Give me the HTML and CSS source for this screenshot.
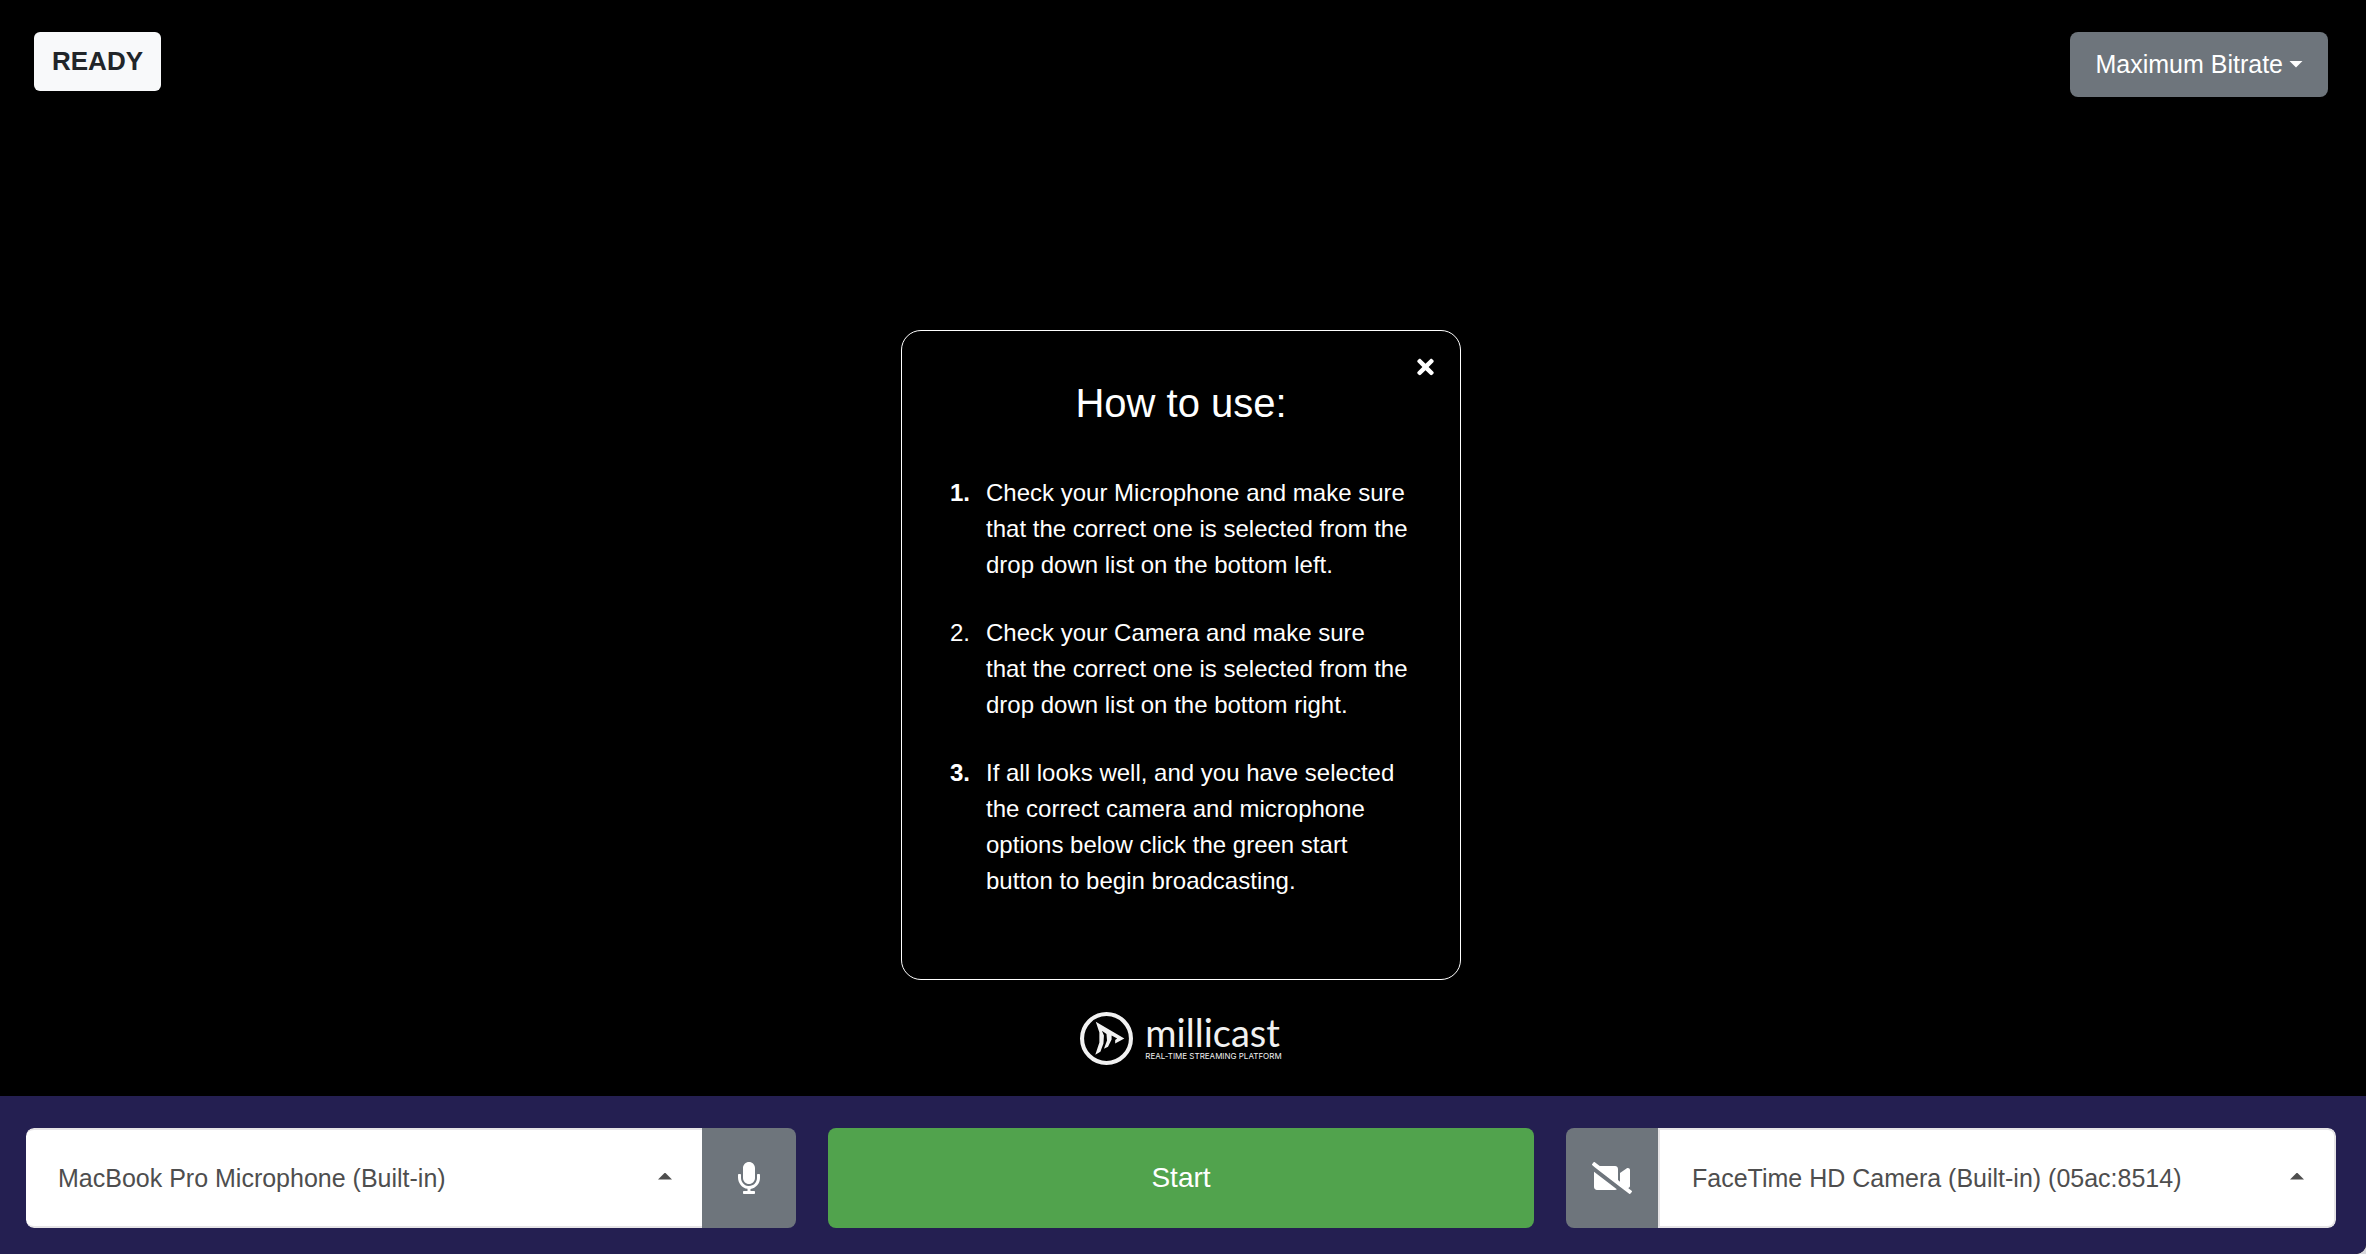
FILE: index.html
```html
<!DOCTYPE html>
<html lang="en">
<head>
<meta charset="utf-8">
<meta name="viewport" content="width=device-width, initial-scale=1">
<title>Millicast Publisher</title>
<link rel="stylesheet" href="styles.css">
</head>
<body>
<div class="app">
  <main class="stage">
    <header class="topbar">
      <span class="badge">READY</span>
      <button class="bitrate" type="button" aria-haspopup="true">Maximum Bitrate<span class="caret caret-down"></span></button>
    </header>

    <section class="guide" aria-labelledby="guide-title">
      <button class="close" type="button" aria-label="Close">
        <svg width="17" height="24" viewBox="0 0 352 512" fill="currentColor" aria-hidden="true"><path d="M242.72 256l100.07-100.07c12.28-12.28 12.28-32.19 0-44.48l-22.24-22.24c-12.28-12.28-32.19-12.28-44.48 0L176 189.28 75.93 89.21c-12.28-12.28-32.19-12.28-44.48 0L9.21 111.45c-12.28 12.28-12.28 32.19 0 44.48L109.28 256 9.21 356.07c-12.28 12.28-12.28 32.19 0 44.48l22.24 22.24c12.28 12.28 32.2 12.28 44.48 0L176 322.72l100.07 100.07c12.28 12.28 32.2 12.28 44.48 0l22.24-22.24c12.28-12.28 12.28-32.19 0-44.48L242.72 256z"/></svg>
      </button>
      <h1 class="guide-title" id="guide-title">How to use:</h1>
      <ol class="steps">
        <li class="step"><b>1.</b><p>Check your Microphone and make sure that the correct one is selected from the drop down list on the bottom left.</p></li>
        <li class="step"><span>2.</span><p>Check your Camera and make sure that the correct one is selected from the drop down list on the bottom right.</p></li>
        <li class="step"><b>3.</b><p>If all looks well, and you have selected the correct camera and microphone options below click the green start button to begin broadcasting.</p></li>
      </ol>
    </section>

    <div class="logo">
      <svg width="53" height="53" viewBox="0 0 52 52" aria-hidden="true">
        <circle cx="26" cy="26" r="24" fill="none" stroke="#f1f1f1" stroke-width="4"/>
        <path fill="#f1f1f1" d="M15.5 9.5L43.5 26L34.5 31L34.5 27.5L36.5 26L31 23L31 27L27.5 34L23.5 36L26.5 28L26 21.5L21.5 18.5L23.5 23L23 31L20 39L15 42L19 30L19 20Z"/>
      </svg>
      <div class="wordmark">
        <span class="name">millicast</span>
        <span class="tagline">REAL-TIME STREAMING PLATFORM</span>
      </div>
    </div>
  </main>

  <footer class="controls">
    <div class="group">
      <label class="picker picker-mic">
        <select aria-label="Microphone"><option>MacBook Pro Microphone (Built-in)</option></select>
        <span class="caret caret-up"></span>
      </label>
      <button class="toggle toggle-mic" type="button" aria-label="Mute microphone">
        <svg width="22" height="32" viewBox="0 0 352 512" fill="currentColor" aria-hidden="true"><path d="M176 352c53.02 0 96-42.98 96-96V96c0-53.02-42.98-96-96-96S80 42.98 80 96v160c0 53.02 42.98 96 96 96zm160-160h-16c-8.84 0-16 7.16-16 16v48c0 74.8-64.49 134.82-140.79 127.38C96.71 376.89 48 317.11 48 250.3V208c0-8.84-7.16-16-16-16H16c-8.84 0-16 7.16-16 16v40.16c0 89.64 63.97 169.55 152 181.69V464H96c-8.84 0-16 7.16-16 16v16c0 8.84 7.16 16 16 16h160c8.84 0 16-7.16 16-16v-16c0-8.84-7.16-16-16-16h-56v-33.77C285.71 418.47 352 344.9 352 256v-48c0-8.84-7.16-16-16-16z"/></svg>
      </button>
    </div>
    <button class="start" type="button">Start</button>
    <div class="group">
      <button class="toggle toggle-cam" type="button" aria-label="Enable camera">
        <svg width="40" height="32" viewBox="0 0 640 512" fill="currentColor" aria-hidden="true"><path d="M633.8 458.1l-55-42.5c15.4-1.4 29.2-13.7 29.2-31.1v-257c0-25.5-29.1-40.4-50.4-25.8L448 177.3v137.2l-32-24.7v-178c0-26.4-21.4-47.8-47.8-47.8H123.9L45.5 3.4C38.5-2 28.5-.8 23 6.2L3.4 31.4c-5.4 7-4.2 17 2.8 22.4L42.7 82 416 370.6l178.5 138c7 5.4 17 4.2 22.5-2.8l19.6-25.3c5.5-6.9 4.2-17-2.8-22.4zM32 400.2c0 26.4 21.4 47.8 47.8 47.8h288.4c11.2 0 21.4-4 29.6-10.5L32 154.7v245.5z"/></svg>
      </button>
      <label class="picker picker-cam">
        <select aria-label="Camera"><option>FaceTime HD Camera (Built-in) (05ac:8514)</option></select>
        <span class="caret caret-up"></span>
      </label>
    </div>
  </footer>
</div>
</body>
</html>
```
FILE: styles.css
```css
* { box-sizing: border-box; }

html { background: #d8d8dc; }

body {
  margin: 0;
  font-family: "Liberation Sans", Arial, sans-serif;
  font-size: 24px;
  line-height: 36px;
  color: #fff;
}

button, select { font: inherit; color: inherit; }
button { border: 0; padding: 0; cursor: pointer; }

.app {
  display: flex;
  flex-direction: column;
  min-height: 100vh;
  background: #000;
  border-bottom-right-radius: 10px;
  overflow: hidden;
}

.stage {
  flex: 1;
  display: flex;
  flex-direction: column;
  align-items: center;
  padding: 32px 38px 31px 34px;
}

.topbar {
  align-self: stretch;
  display: flex;
  justify-content: space-between;
  align-items: flex-start;
}

.badge {
  padding: 11px 18px 12px;
  border-radius: 6px;
  background: #f8f9fa;
  color: #212529;
  font-size: 26px;
  font-weight: 700;
}

.bitrate {
  display: flex;
  align-items: center;
  gap: 6px;
  padding: 14px 25px 15px;
  border-radius: 8px;
  background: #6e757c;
  font-size: 25px;
}

.caret {
  width: 14px;
  height: 7px;
  background: currentColor;
}
.caret-down { clip-path: polygon(0 0, 100% 0, 50% 100%); }
.caret-up { clip-path: polygon(0 100%, 50% 0, 100% 100%); }

.guide {
  position: relative;
  width: 560px;
  margin-top: auto;
  padding: 48px;
  padding-bottom: 80px;
  border: 1px solid #fff;
  border-radius: 20px;
}

.close {
  position: absolute;
  top: 24px;
  right: 26px;
  display: flex;
  background: none;
}

.guide-title {
  margin: 0 0 48px;
  font-size: 40px;
  line-height: 48px;
  font-weight: 400;
  text-align: center;
}

.steps {
  display: flex;
  flex-direction: column;
  gap: 32px;
  max-width: 460px;
  margin: 0;
  padding: 0;
  list-style: none;
}

.step { display: flex; gap: 16px; }
.step p { margin: 0; }

.logo {
  display: flex;
  gap: 12px;
  margin-top: 32px;
  color: #f1f1f1;
}

.wordmark { display: flex; flex-direction: column; }
.name {
  font-family: Lato, sans-serif;
  font-size: 38px;
  line-height: 40px;
}
.tagline {
  font-family: Inter, sans-serif;
  font-size: 8px;
  line-height: 8px;
}

.controls {
  display: grid;
  grid-template-columns: 770fr 706fr 770fr;
  gap: 32px;
  padding: 32px 30px 26px 26px;
  background: #241f51;
}

.group {
  display: flex;
  height: 100px;
  border-radius: 8px;
  overflow: hidden;
}

.picker {
  flex: 1;
  display: grid;
  align-items: center;
  color: #4e4e4e;
}
.picker > * { grid-area: 1 / 1; }
.picker select {
  width: 100%;
  height: 100%;
  padding: 0 32px;
  border: 2px solid #e6e4e6;
  background: #fff;
  font-size: 25px;
  appearance: none;
}
.picker-mic select { border-left: 0; border-right: 0; border-radius: 8px 0 0 8px; }
.picker-cam select { border-radius: 0 8px 8px 0; }
.picker .caret {
  justify-self: end;
  margin: 0 30px 4px 0;
  pointer-events: none;
}
.picker-cam .caret { margin-right: 32px; }

.toggle {
  display: grid;
  place-items: center;
  width: 94px;
  background: #6e757c;
}
.toggle-cam { width: 92px; }

.start {
  border-radius: 8px;
  background: #51a34d;
  font-size: 28px;
}
```
